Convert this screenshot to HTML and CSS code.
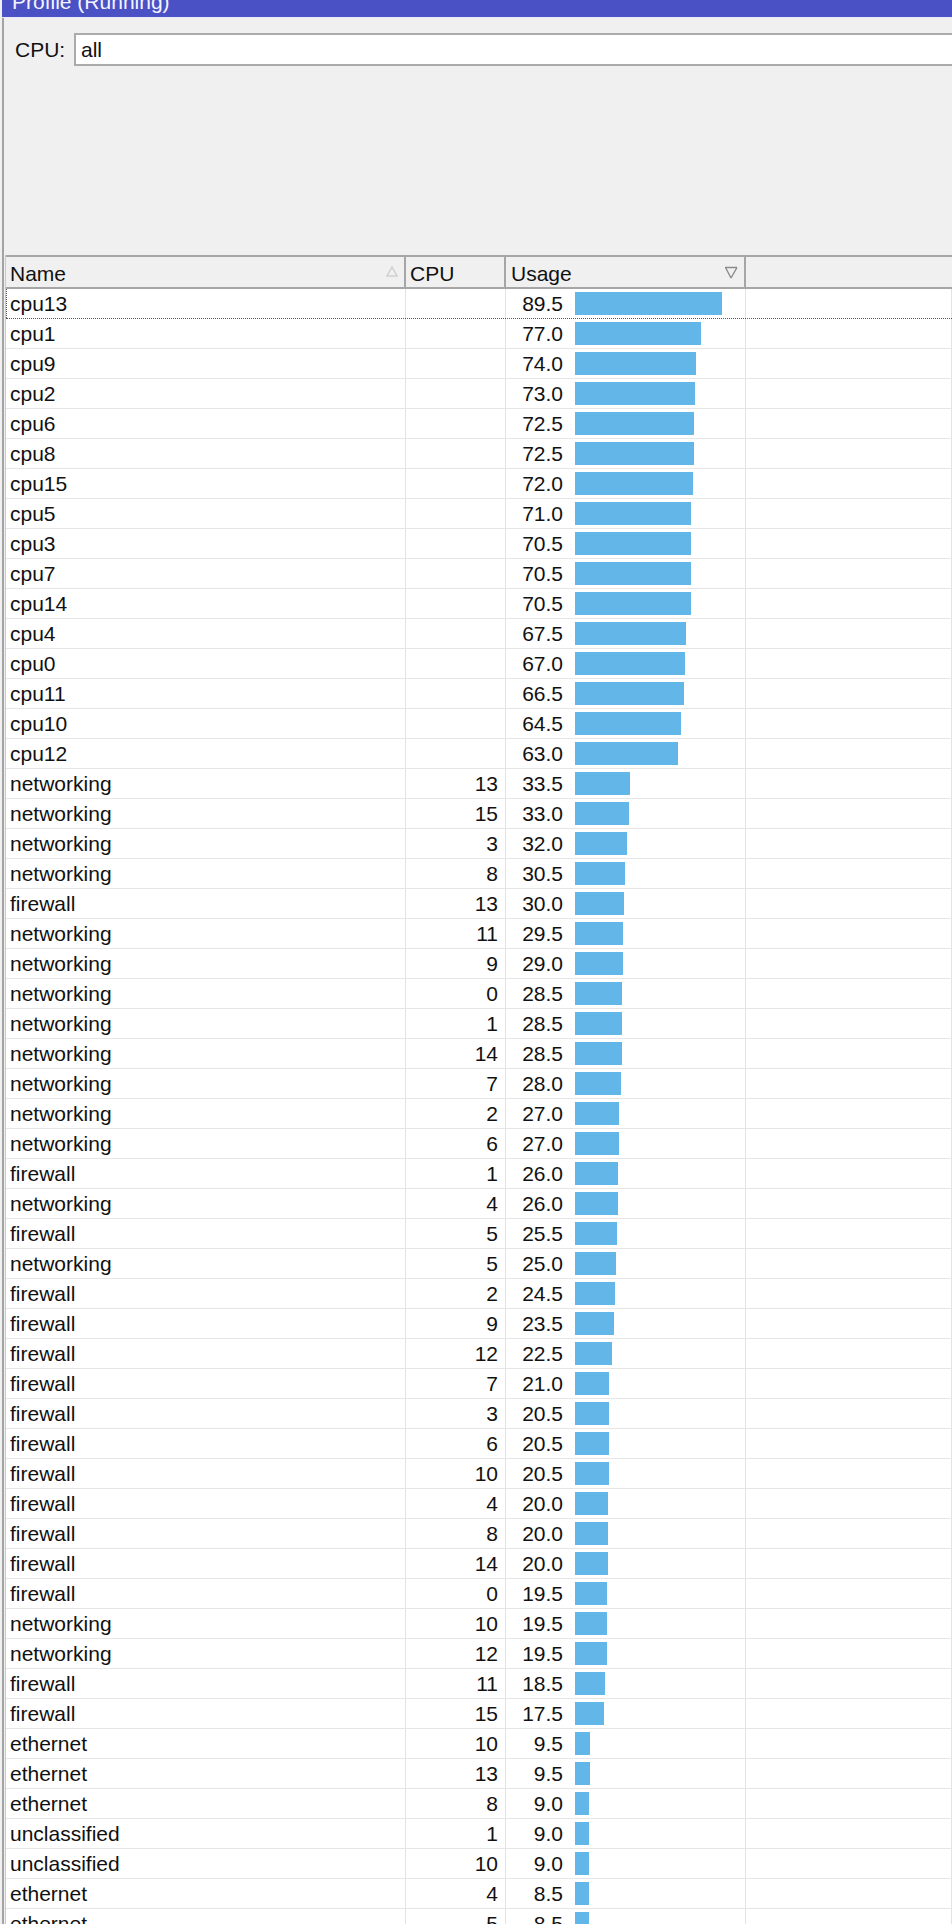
FILE: index.html
```
<!DOCTYPE html>
<html>
<head>
    <title>Profile (Running)</title>
    <link rel="stylesheet" href="styles.css">
</head>
<body>
    <div class="window">
        <div class="title-bar"><div class="title-text">Profile (Running)</div></div>
        <div class="filter-panel">
            <label class="filter-label">CPU:</label>
            <div class="filter-input">all</div>
        </div>
        <div class="table">
            <div class="row head">
                <div class="cell name">Name
                    <svg class="sort-up" width="12" height="11" viewBox="0 0 12 11"><path d="M6 1 L11 10 L1 10 Z" fill="none" stroke="#cfcfcf" stroke-width="1.4"/></svg>
                </div>
                <div class="cell cpu">CPU</div>
                <div class="cell usage">Usage
                    <svg class="sort-down" width="14" height="13" viewBox="0 0 14 13"><path d="M1 1.5 L13 1.5 M1.5 1.5 L7 12 M13 1.5 L7 12" fill="none" stroke="#8a8a8a" stroke-width="1.4"/></svg>
                </div>
                <div class="cell rest"></div>
            </div>
            <div class="row focus"><div class="cell name">cpu13</div><div class="cell cpu"></div><div class="cell usage"><span class="val">89.5</span><span class="bar" style="width:147px"></span></div><div class="cell rest"></div></div>
            <div class="row"><div class="cell name">cpu1</div><div class="cell cpu"></div><div class="cell usage"><span class="val">77.0</span><span class="bar" style="width:126px"></span></div><div class="cell rest"></div></div>
            <div class="row"><div class="cell name">cpu9</div><div class="cell cpu"></div><div class="cell usage"><span class="val">74.0</span><span class="bar" style="width:121px"></span></div><div class="cell rest"></div></div>
            <div class="row"><div class="cell name">cpu2</div><div class="cell cpu"></div><div class="cell usage"><span class="val">73.0</span><span class="bar" style="width:120px"></span></div><div class="cell rest"></div></div>
            <div class="row"><div class="cell name">cpu6</div><div class="cell cpu"></div><div class="cell usage"><span class="val">72.5</span><span class="bar" style="width:119px"></span></div><div class="cell rest"></div></div>
            <div class="row"><div class="cell name">cpu8</div><div class="cell cpu"></div><div class="cell usage"><span class="val">72.5</span><span class="bar" style="width:119px"></span></div><div class="cell rest"></div></div>
            <div class="row"><div class="cell name">cpu15</div><div class="cell cpu"></div><div class="cell usage"><span class="val">72.0</span><span class="bar" style="width:118px"></span></div><div class="cell rest"></div></div>
            <div class="row"><div class="cell name">cpu5</div><div class="cell cpu"></div><div class="cell usage"><span class="val">71.0</span><span class="bar" style="width:116px"></span></div><div class="cell rest"></div></div>
            <div class="row"><div class="cell name">cpu3</div><div class="cell cpu"></div><div class="cell usage"><span class="val">70.5</span><span class="bar" style="width:116px"></span></div><div class="cell rest"></div></div>
            <div class="row"><div class="cell name">cpu7</div><div class="cell cpu"></div><div class="cell usage"><span class="val">70.5</span><span class="bar" style="width:116px"></span></div><div class="cell rest"></div></div>
            <div class="row"><div class="cell name">cpu14</div><div class="cell cpu"></div><div class="cell usage"><span class="val">70.5</span><span class="bar" style="width:116px"></span></div><div class="cell rest"></div></div>
            <div class="row"><div class="cell name">cpu4</div><div class="cell cpu"></div><div class="cell usage"><span class="val">67.5</span><span class="bar" style="width:111px"></span></div><div class="cell rest"></div></div>
            <div class="row"><div class="cell name">cpu0</div><div class="cell cpu"></div><div class="cell usage"><span class="val">67.0</span><span class="bar" style="width:110px"></span></div><div class="cell rest"></div></div>
            <div class="row"><div class="cell name">cpu11</div><div class="cell cpu"></div><div class="cell usage"><span class="val">66.5</span><span class="bar" style="width:109px"></span></div><div class="cell rest"></div></div>
            <div class="row"><div class="cell name">cpu10</div><div class="cell cpu"></div><div class="cell usage"><span class="val">64.5</span><span class="bar" style="width:106px"></span></div><div class="cell rest"></div></div>
            <div class="row"><div class="cell name">cpu12</div><div class="cell cpu"></div><div class="cell usage"><span class="val">63.0</span><span class="bar" style="width:103px"></span></div><div class="cell rest"></div></div>
            <div class="row"><div class="cell name">networking</div><div class="cell cpu">13</div><div class="cell usage"><span class="val">33.5</span><span class="bar" style="width:55px"></span></div><div class="cell rest"></div></div>
            <div class="row"><div class="cell name">networking</div><div class="cell cpu">15</div><div class="cell usage"><span class="val">33.0</span><span class="bar" style="width:54px"></span></div><div class="cell rest"></div></div>
            <div class="row"><div class="cell name">networking</div><div class="cell cpu">3</div><div class="cell usage"><span class="val">32.0</span><span class="bar" style="width:52px"></span></div><div class="cell rest"></div></div>
            <div class="row"><div class="cell name">networking</div><div class="cell cpu">8</div><div class="cell usage"><span class="val">30.5</span><span class="bar" style="width:50px"></span></div><div class="cell rest"></div></div>
            <div class="row"><div class="cell name">firewall</div><div class="cell cpu">13</div><div class="cell usage"><span class="val">30.0</span><span class="bar" style="width:49px"></span></div><div class="cell rest"></div></div>
            <div class="row"><div class="cell name">networking</div><div class="cell cpu">11</div><div class="cell usage"><span class="val">29.5</span><span class="bar" style="width:48px"></span></div><div class="cell rest"></div></div>
            <div class="row"><div class="cell name">networking</div><div class="cell cpu">9</div><div class="cell usage"><span class="val">29.0</span><span class="bar" style="width:48px"></span></div><div class="cell rest"></div></div>
            <div class="row"><div class="cell name">networking</div><div class="cell cpu">0</div><div class="cell usage"><span class="val">28.5</span><span class="bar" style="width:47px"></span></div><div class="cell rest"></div></div>
            <div class="row"><div class="cell name">networking</div><div class="cell cpu">1</div><div class="cell usage"><span class="val">28.5</span><span class="bar" style="width:47px"></span></div><div class="cell rest"></div></div>
            <div class="row"><div class="cell name">networking</div><div class="cell cpu">14</div><div class="cell usage"><span class="val">28.5</span><span class="bar" style="width:47px"></span></div><div class="cell rest"></div></div>
            <div class="row"><div class="cell name">networking</div><div class="cell cpu">7</div><div class="cell usage"><span class="val">28.0</span><span class="bar" style="width:46px"></span></div><div class="cell rest"></div></div>
            <div class="row"><div class="cell name">networking</div><div class="cell cpu">2</div><div class="cell usage"><span class="val">27.0</span><span class="bar" style="width:44px"></span></div><div class="cell rest"></div></div>
            <div class="row"><div class="cell name">networking</div><div class="cell cpu">6</div><div class="cell usage"><span class="val">27.0</span><span class="bar" style="width:44px"></span></div><div class="cell rest"></div></div>
            <div class="row"><div class="cell name">firewall</div><div class="cell cpu">1</div><div class="cell usage"><span class="val">26.0</span><span class="bar" style="width:43px"></span></div><div class="cell rest"></div></div>
            <div class="row"><div class="cell name">networking</div><div class="cell cpu">4</div><div class="cell usage"><span class="val">26.0</span><span class="bar" style="width:43px"></span></div><div class="cell rest"></div></div>
            <div class="row"><div class="cell name">firewall</div><div class="cell cpu">5</div><div class="cell usage"><span class="val">25.5</span><span class="bar" style="width:42px"></span></div><div class="cell rest"></div></div>
            <div class="row"><div class="cell name">networking</div><div class="cell cpu">5</div><div class="cell usage"><span class="val">25.0</span><span class="bar" style="width:41px"></span></div><div class="cell rest"></div></div>
            <div class="row"><div class="cell name">firewall</div><div class="cell cpu">2</div><div class="cell usage"><span class="val">24.5</span><span class="bar" style="width:40px"></span></div><div class="cell rest"></div></div>
            <div class="row"><div class="cell name">firewall</div><div class="cell cpu">9</div><div class="cell usage"><span class="val">23.5</span><span class="bar" style="width:39px"></span></div><div class="cell rest"></div></div>
            <div class="row"><div class="cell name">firewall</div><div class="cell cpu">12</div><div class="cell usage"><span class="val">22.5</span><span class="bar" style="width:37px"></span></div><div class="cell rest"></div></div>
            <div class="row"><div class="cell name">firewall</div><div class="cell cpu">7</div><div class="cell usage"><span class="val">21.0</span><span class="bar" style="width:34px"></span></div><div class="cell rest"></div></div>
            <div class="row"><div class="cell name">firewall</div><div class="cell cpu">3</div><div class="cell usage"><span class="val">20.5</span><span class="bar" style="width:34px"></span></div><div class="cell rest"></div></div>
            <div class="row"><div class="cell name">firewall</div><div class="cell cpu">6</div><div class="cell usage"><span class="val">20.5</span><span class="bar" style="width:34px"></span></div><div class="cell rest"></div></div>
            <div class="row"><div class="cell name">firewall</div><div class="cell cpu">10</div><div class="cell usage"><span class="val">20.5</span><span class="bar" style="width:34px"></span></div><div class="cell rest"></div></div>
            <div class="row"><div class="cell name">firewall</div><div class="cell cpu">4</div><div class="cell usage"><span class="val">20.0</span><span class="bar" style="width:33px"></span></div><div class="cell rest"></div></div>
            <div class="row"><div class="cell name">firewall</div><div class="cell cpu">8</div><div class="cell usage"><span class="val">20.0</span><span class="bar" style="width:33px"></span></div><div class="cell rest"></div></div>
            <div class="row"><div class="cell name">firewall</div><div class="cell cpu">14</div><div class="cell usage"><span class="val">20.0</span><span class="bar" style="width:33px"></span></div><div class="cell rest"></div></div>
            <div class="row"><div class="cell name">firewall</div><div class="cell cpu">0</div><div class="cell usage"><span class="val">19.5</span><span class="bar" style="width:32px"></span></div><div class="cell rest"></div></div>
            <div class="row"><div class="cell name">networking</div><div class="cell cpu">10</div><div class="cell usage"><span class="val">19.5</span><span class="bar" style="width:32px"></span></div><div class="cell rest"></div></div>
            <div class="row"><div class="cell name">networking</div><div class="cell cpu">12</div><div class="cell usage"><span class="val">19.5</span><span class="bar" style="width:32px"></span></div><div class="cell rest"></div></div>
            <div class="row"><div class="cell name">firewall</div><div class="cell cpu">11</div><div class="cell usage"><span class="val">18.5</span><span class="bar" style="width:30px"></span></div><div class="cell rest"></div></div>
            <div class="row"><div class="cell name">firewall</div><div class="cell cpu">15</div><div class="cell usage"><span class="val">17.5</span><span class="bar" style="width:29px"></span></div><div class="cell rest"></div></div>
            <div class="row"><div class="cell name">ethernet</div><div class="cell cpu">10</div><div class="cell usage"><span class="val">9.5</span><span class="bar" style="width:15px"></span></div><div class="cell rest"></div></div>
            <div class="row"><div class="cell name">ethernet</div><div class="cell cpu">13</div><div class="cell usage"><span class="val">9.5</span><span class="bar" style="width:15px"></span></div><div class="cell rest"></div></div>
            <div class="row"><div class="cell name">ethernet</div><div class="cell cpu">8</div><div class="cell usage"><span class="val">9.0</span><span class="bar" style="width:14px"></span></div><div class="cell rest"></div></div>
            <div class="row"><div class="cell name">unclassified</div><div class="cell cpu">1</div><div class="cell usage"><span class="val">9.0</span><span class="bar" style="width:14px"></span></div><div class="cell rest"></div></div>
            <div class="row"><div class="cell name">unclassified</div><div class="cell cpu">10</div><div class="cell usage"><span class="val">9.0</span><span class="bar" style="width:14px"></span></div><div class="cell rest"></div></div>
            <div class="row"><div class="cell name">ethernet</div><div class="cell cpu">4</div><div class="cell usage"><span class="val">8.5</span><span class="bar" style="width:14px"></span></div><div class="cell rest"></div></div>
            <div class="row"><div class="cell name">ethernet</div><div class="cell cpu">5</div><div class="cell usage"><span class="val">8.5</span><span class="bar" style="width:14px"></span></div><div class="cell rest"></div></div>
        </div>
    </div>
</body>
</html>
```

FILE: styles.css
```
body {
    margin: 0;
    background: #f0f0f0;
    font-family: "Liberation Sans", Arial, sans-serif;
    font-size: 21px;
    color: #111;
    overflow: hidden;
}
.window {
    margin-left: 2px;
    border-left: 2px solid #a3a3a3;
}
.title-bar {
    height: 17px;
    background: #4a51c4;
    border-bottom: 1px solid #e8e8f6;
    overflow: hidden;
    margin-left: -2px;
}
.title-text {
    color: #f4f4ff;
    margin-top: -8px;
    padding-left: 10px;
    line-height: 20px;
    white-space: nowrap;
}
.filter-panel {
    height: 237px;
    display: flex;
    align-items: flex-start;
    padding-top: 15px;
    box-sizing: border-box;
}
.filter-label {
    padding-left: 11px;
    width: 59px;
    line-height: 33px;
    flex: none;
}
.filter-input {
    flex: 1;
    height: 33px;
    box-sizing: border-box;
    background: #fff;
    border: 2px solid #ababab;
    border-right: none;
    padding-left: 5px;
    line-height: 29px;
}
.table {
    margin-left: 1px;
    border-left: 1px solid #c9c9c9;
    background: #fff;
}
.row {
    display: grid;
    grid-template-columns: 400px 100px 240px 1fr;
    height: 30px;
    border-bottom: 1px solid #e6e6e6;
    box-sizing: border-box;
}
.cell {
    border-right: 1px solid #e3e3e3;
    line-height: 29px;
    white-space: nowrap;
    overflow: hidden;
}
.row.head {
    height: 34px;
    background: #f0f0f0;
    border-top: 2px solid #a6a6a6;
    border-bottom: 2px solid #a6a6a6;
}
.row.head .cell {
    border-right: 2px solid #a6a6a6;
    line-height: 27px;
    padding-top: 3px;
    display: flex;
    align-items: flex-start;
}
.row.head .rest {
    border-right: none;
}
/* focus rectangle runs off the right edge, so only left + bottom show */
.row.focus {
    border-bottom: 1px dotted #5a5a5a;
}
.row.focus .name {
    border-left: 1px dotted #5a5a5a;
    padding-left: 3px;
}
.name {
    padding-left: 4px;
}
.cpu {
    text-align: right;
    padding-right: 7px;
}
.row.head .cpu {
    padding-left: 4px;
}
.row.head .usage {
    padding-left: 5px;
}
.sort-up {
    margin-left: auto;
    margin-right: 6px;
    margin-top: 6px;
}
.sort-down {
    margin-left: auto;
    margin-right: 6px;
    margin-top: 6px;
}
.usage {
    display: flex;
    align-items: flex-start;
}
.val {
    width: 57px;
    text-align: right;
    flex: none;
}
.bar {
    display: block;
    height: 23px;
    margin-top: 3px;
    margin-left: 12px;
    background: #62b6e8;
    flex: none;
}
```
